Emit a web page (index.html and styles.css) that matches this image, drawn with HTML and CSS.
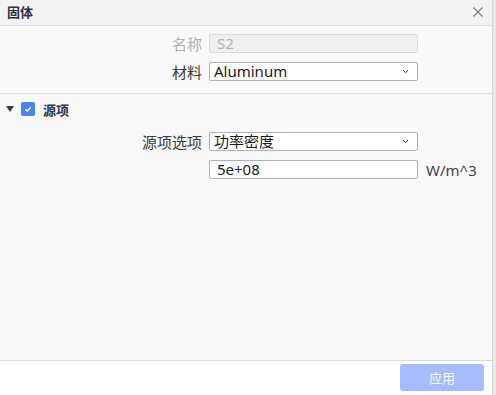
FILE: index.html
```html
<!DOCTYPE html>
<html lang="zh">
<head>
<meta charset="utf-8">
<title>固体</title>
<link rel="stylesheet" href="styles.css">
</head>
<body>
<div class="panel">
  <div class="header">
    <span class="title">固体</span>
    <svg class="close" width="10" height="10" viewBox="0 0 10 10"><path d="M0.5 0.5L9.5 9.5M9.5 0.5L0.5 9.5" stroke="#7a7a7a" stroke-width="1.1" fill="none"/></svg>
  </div>
  <div class="content">
    <div class="group">
      <div class="row">
        <span class="label disabled">名称</span>
        <div class="field input is-disabled">S2</div>
      </div>
      <div class="row">
        <span class="label">材料</span>
        <div class="field select">Aluminum
          <svg class="chev" width="7" height="5" viewBox="0 0 7 5"><path d="M1 1.2L3.5 3.6L6 1.2" stroke="#333" stroke-width="1" fill="none"/></svg>
        </div>
      </div>
    </div>
    <div class="section">
      <div class="section-head">
        <svg class="caret" width="8" height="6" viewBox="0 0 8 6"><path d="M0 0H8L4 6Z" fill="#3a3f4a"/></svg>
        <span class="check"><svg width="14" height="14" viewBox="0 0 14 14"><path d="M4.3 7.2L6.2 9L9.8 5.2" stroke="#fff" stroke-width="1.3" fill="none"/></svg></span>
        <span class="section-title">源项</span>
      </div>
      <div class="group">
        <div class="row">
          <span class="label">源项选项</span>
          <div class="field select">功率密度
            <svg class="chev" width="7" height="5" viewBox="0 0 7 5"><path d="M1 1.2L3.5 3.6L6 1.2" stroke="#333" stroke-width="1" fill="none"/></svg>
          </div>
        </div>
        <div class="row">
          <span class="label"></span>
          <div class="field input">5e+08</div>
          <span class="unit">W/m^3</span>
        </div>
      </div>
    </div>
  </div>
  <div class="footer">
    <button class="apply">应用</button>
  </div>
</div>
</body>
</html>
```

FILE: styles.css
```css
* { box-sizing: border-box; }
html, body { margin: 0; padding: 0; }
body {
  width: 496px;
  height: 395px;
  background: #e6e8eb;
  font-family: "Noto Sans", "Noto Sans CJK SC", sans-serif;
  color: #333;
  overflow: hidden;
}
.panel {
  width: 493px;
  height: 395px;
  border-right: 1px solid #d9d9d9;
  display: flex;
  flex-direction: column;
  background: #fff;
}
.header {
  height: 26px;
  flex: none;
  background: #f3f3f3;
  border-bottom: 1px solid #dcdcdc;
  display: flex;
  align-items: center;
  justify-content: space-between;
  padding: 0 9px 2px 7px;
}
.title {
  font-size: 13px;
  font-weight: bold;
  color: #2f3440;
  font-family: "Noto Sans CJK SC", sans-serif;
}
.close { display: block; margin-top: 1px; }
.content {
  flex: 1;
  background: #f9f9f9;
  display: flex;
  flex-direction: column;
}
.group {
  display: flex;
  flex-direction: column;
  gap: 9px;
  padding-top: 8px;
}
.row {
  display: flex;
  align-items: center;
  height: 19px;
}
.label {
  width: 202px;
  text-align: right;
  font-size: 15px;
  line-height: 19px;
  margin-right: 7px;
  color: #3a3a3a;
  font-family: "Noto Sans CJK SC", sans-serif;
}
.label.disabled { color: #b0b0b0; }
.field {
  width: 209px;
  height: 19px;
  border: 1px solid #aeb0bc;
  border-radius: 2px;
  background: #fff;
  font-size: 15px;
  line-height: 17px;
  padding-left: 4px;
  color: #1a1a1a;
  position: relative;
  font-family: "Noto Sans", "Noto Sans CJK SC", sans-serif;
}
.field.input { padding-left: 7px; }
.field.is-disabled {
  background: #f0f0f0;
  border-color: #dadada;
  color: #b4b4b4;
}
.chev {
  position: absolute;
  right: 8px;
  top: 6px;
}
.unit {
  margin-left: 8px;
  font-size: 15px;
  color: #444;
}
.section {
  margin-top: 12px;
  border-top: 1px solid #dcdcdc;
}
.section-head {
  height: 30px;
  display: flex;
  align-items: center;
  padding-left: 6px;
}
.caret { display: block; margin-right: 7px; }
.check {
  width: 14px;
  height: 14px;
  border-radius: 2px;
  background: #4a83f6;
  display: block;
  margin-right: 8px;
}
.check svg { display: block; }
.section-title {
  font-size: 13px;
  font-weight: bold;
  color: #2f3440;
  font-family: "Noto Sans CJK SC", sans-serif;
}
.footer {
  height: 35px;
  flex: none;
  border-top: 1px solid #dcdcdc;
  background: #fff;
  display: flex;
  justify-content: flex-end;
  align-items: flex-start;
  padding: 3px 8px 0 0;
}
.apply {
  width: 84px;
  height: 27px;
  border: none;
  border-radius: 3px;
  background: #a6bcfd;
  color: #f3f6ff;
  font-size: 13px;
  font-family: "Noto Sans CJK SC", sans-serif;
  padding: 0;
}
```
